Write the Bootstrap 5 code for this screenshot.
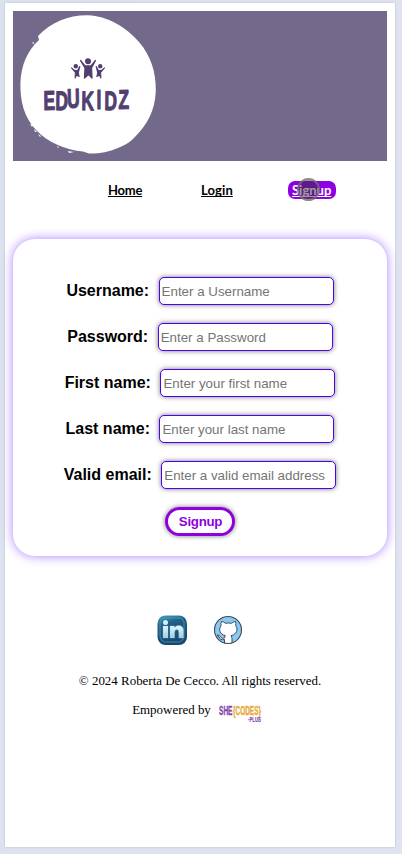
<!DOCTYPE html>
<html lang="en">
<head>
<meta charset="utf-8">
<meta name="viewport" content="width=device-width, initial-scale=1">
<title>Edukidz – Signup</title>
<link href="https://cdn.jsdelivr.net/npm/bootstrap@5.3.0/dist/css/bootstrap.min.css" rel="stylesheet">
<style>
body{background:linear-gradient(100deg,#dbe2ef,#e0e3f1);font-family:"Liberation Sans",Arial,sans-serif;color:#000;min-height:854px;overflow:hidden}
.sheet{margin:3px 7px 0 5px;height:844px;padding:8px;background:#fff;box-shadow:0 0 2px #b9bac4}
.banner{height:150px;background:#73698a}
.banner svg{display:block}
.menu{height:78px;padding:20px 0 0 95px;font:bold 13px/18px Lato,"Open Sans",sans-serif;letter-spacing:-.25px}
.menu a{color:#000;text-decoration:underline;text-underline-offset:1px;text-decoration-skip-ink:none}
.menu .home-link{width:34px}
.menu .login-link{width:32px;margin-left:59px;letter-spacing:.1px}
.menu .current{width:48px;height:18px;margin-left:55px;padding-left:4px;background:#8f00e0;color:#fff;border-radius:7px;letter-spacing:0}
.tap{position:absolute;left:9px;top:-3px;width:23px;height:23px;border-radius:50%;background:rgba(50,50,50,.48);border:2px solid rgba(130,130,130,.6)}
.signup{height:317px;padding-top:38px;border-radius:22px;box-shadow:0 0 11px #ab82ff}
.field{height:28px;margin-bottom:18px}
.field label{font-weight:700;font-size:16px;line-height:28px;margin-right:9.5px}
.field input{width:175px;height:28px;padding:1px 2px;border:1px solid #4f00ee;border-radius:5px;box-shadow:0 0 5px #777;font-size:13.333px;background:#fff;outline:0}
.field input::placeholder{color:#757575}
.send{width:70px;height:29px;padding:0 0 0 1px;border:3px solid #8f00e0;border-radius:15px;background:#fff;color:#8f00e0;font:bold 13.333px/22px "Liberation Sans",sans-serif;letter-spacing:-.3px;box-shadow:0 0 5px #777}
.social{margin-top:59px;height:30px;gap:25px;padding-right:1px}
.foot{font:12.95px/16px "Liberation Serif",serif}
.rights{padding-top:28px}
.powered{padding:13px 4px 0 0}
</style>
</head>
<body>
<main class="sheet">
<header class="banner">
<svg width="160" height="150" viewBox="13 11 160 150" role="img" aria-label="Edukidz">
<path d="M88 15.300C107 16 126 27 139 42C151 56 156 72 155.800 91C155 111 147 125 134 138C129 143 123 146 118 148C108 152 98 154 89 153.500L83 151.500C66 150 47 142 36 130C24 117 20 101 20.400 83C21 66 27 51 39 40L38 36C51 22 69 15 88 15.300Z" fill="#fff"/>
<path d="M32 43l2-1v2zM30 124l3 1-1 2zM34 129l3 3-2 0zM38 134l3 2-1 1zM57 146l2 1-1 1zM68 151l6 1-5 1z" fill="#fff"/>
<g fill="#51406f" stroke="#51406f" stroke-linecap="round" stroke-linejoin="round">
<circle cx="88" cy="61.300" r="3" stroke="none"/>
<path d="M80.500 60.500l4.500 5.500h6l4.500-5.500-4 7.500.5 10-3.500-3.500-4 3.500 .5-10z" stroke-width="1.300"/>
<circle cx="75.800" cy="66.300" r="2.200" stroke="none"/>
<path d="M71.500 68l3 2.500h3l2.300-4-1.500 6 .8 4-2.500-1.500-1.500 3 .3-5.500zM104.500 68l-3 2.500h-3l-2.300-4 1.500 6-.8 4 2.500-1.500 1.500 3-.3-5.500z" stroke-width="1.100"/>
<circle cx="100.200" cy="66.300" r="2.200" stroke="none"/>
</g>
<text transform="scale(.65 1)" x="66.800 85 103.500 125 148.500 160.500 182.500" y="110 110 108 110 109 110 109" rotate="-1 1 -2 1 0 1 -1" font-family="Liberation Sans,sans-serif" font-weight="700" font-size="27" fill="#51406f" stroke="#51406f" stroke-width="1.100" stroke-linejoin="round">EDUKIDZ</text>
</svg>
</header>
<nav class="menu d-flex align-items-start">
<a class="home-link" href="#">Home</a><a class="login-link" href="#">Login</a><a class="current position-relative" href="#">Signup<span class="tap"></span></a>
</nav>
<form class="signup text-center">
<div class="field d-flex justify-content-center"><label for="user">Username:</label><input id="user" placeholder="Enter a Username"></div>
<div class="field d-flex justify-content-center"><label for="pass">Password:</label><input id="pass" type="password" placeholder="Enter a Password"></div>
<div class="field d-flex justify-content-center"><label for="first">First name:</label><input id="first" placeholder="Enter your first name"></div>
<div class="field d-flex justify-content-center"><label for="last">Last name:</label><input id="last" placeholder="Enter your last name"></div>
<div class="field d-flex justify-content-center"><label for="mail">Valid email:</label><input id="mail" type="email" placeholder="Enter a valid email address"></div>
<button class="send d-block mx-auto" type="button">Signup</button>
</form>
<footer>
<div class="social d-flex justify-content-center">
<svg width="31" height="31" viewBox="0 0 31 31" role="img" aria-label="LinkedIn">
<defs><linearGradient id="sea" x1="0" y1="0" x2=".3" y2="1"><stop stop-color="#4ba0c5"/><stop offset=".35" stop-color="#205f86"/><stop offset="1" stop-color="#17486e"/></linearGradient><linearGradient id="ice" x2="0" y2="1"><stop stop-color="#e6f6fb"/><stop offset="1" stop-color="#9dcfe4"/></linearGradient></defs>
<rect x=".5" y=".5" width="29.500" height="29.500" rx="8" fill="url(#sea)"/>
<path d="M3 8q1-5 6-5h13q4 0 5 5v14q-2 5-6 5H9q-5 0-6-6z" fill="none" stroke="#4f9dbd" stroke-width="1.500" opacity=".5"/>
<path d="M6 11h5v12H6zM13 11h4.500v1.700Q19 10.500 21.500 10.500q5 0 5 5.500v7h-4.700v-6q0-2.500-2-2.500t-2.200 2.500v6H13z" fill="url(#ice)" stroke="#9dcfe4" stroke-width=".3"/><circle cx="8.500" cy="7.500" r="2.500" fill="#d5edf5"/>
</svg>
<svg width="30" height="30" viewBox="0 0 30 30" role="img" aria-label="GitHub">
<circle cx="15" cy="15" r="13.500" fill="#89c9f5" stroke="#3e4a54" stroke-width="1.100"/>
<path d="M8.500 6.500q2 0 4 1.800 3-.7 6 0 2-1.800 4-1.800.8 2 .2 4 3 4.500-.5 8-1.500 1.700-4.200 2.200 1 1.300 1 3v4.300q-4 1-7.500 0v-3.500q-4.500 1-5.500-2.500l-2-2q2.500-.3 3.500 2 1.500 2 4 1 .2-1.700 1-2.300-2.700-.5-4.200-2.200-3.200-3.500-.2-8-.6-2 .4-4z" fill="#fff" stroke="#414b53" stroke-width="1"/>
</svg>
</div>
<p class="foot rights text-center mb-0">© 2024 Roberta De Cecco. All rights reserved.</p>
<div class="foot powered d-flex justify-content-center">
<span>Empowered by</span>
<svg class="ms-2" width="45" height="22" viewBox="0 0 45 22" role="img" aria-label="SheCodes Plus" font-family="Liberation Sans,sans-serif" font-weight="700">
<text x="0" y="12.500" font-size="12" textLength="13.500" lengthAdjust="spacingAndGlyphs" fill="#8549a9" stroke="#8549a9" stroke-width=".4">SHE</text>
<text x="14" y="12.500" font-size="12" textLength="28" lengthAdjust="spacingAndGlyphs" fill="#e9a83d" stroke="#e9a83d" stroke-width=".4">{CODES}</text>
<text x="29" y="19.500" font-size="7.500" textLength="13" lengthAdjust="spacingAndGlyphs" fill="#8549a9" stroke="#8549a9" stroke-width=".2">·PLUS</text>
</svg>
</div>
</footer>
</main>
<script src="https://cdn.jsdelivr.net/npm/bootstrap@5.3.0/dist/js/bootstrap.bundle.min.js"></script>
</body>
</html>
